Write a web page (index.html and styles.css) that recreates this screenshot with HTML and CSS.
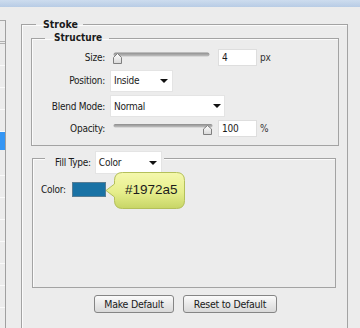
FILE: index.html
```html
<!DOCTYPE html>
<html lang="en">
<head>
    <meta charset="UTF-8">
    <title>Layer Style - Stroke</title>
    <link rel="stylesheet" href="styles.css">
</head>
<body>
    <div class="titlebar"></div>
    <div class="main">
        <div class="sidebar">
            <div class="side-row first"></div>
            <div class="side-row"></div>
            <div class="side-row"></div>
            <div class="side-row"></div>
            <div class="side-row"></div>
            <div class="side-row active"></div>
            <div class="side-row"></div>
            <div class="side-row"></div>
            <div class="side-row"></div>
            <div class="side-row"></div>
            <div class="side-row"></div>
            <div class="side-row"></div>
            <div class="side-row"></div>
            <div class="side-row"></div>
        </div>

        <fieldset class="group stroke">
            <legend>Stroke</legend>

            <fieldset class="group structure">
                <legend>Structure</legend>
                <div class="form-row row-size">
                    <label>Size:</label>
                    <svg class="slider" width="97" height="13" viewBox="0 0 97 13">
                        <defs>
                            <linearGradient id="track" x1="0" y1="0" x2="0" y2="1">
                                <stop offset="0" stop-color="#8c8c8c"/>
                                <stop offset="1" stop-color="#c4c4c4"/>
                            </linearGradient>
                            <linearGradient id="thumb" x1="0" y1="0" x2="0" y2="1">
                                <stop offset="0" stop-color="#ffffff"/>
                                <stop offset="1" stop-color="#d8d8d8"/>
                            </linearGradient>
                        </defs>
                        <rect x="0.5" y="0.5" width="96" height="4" rx="2" fill="url(#track)"/>
                        <path d="M4.5 1.5 L8.5 5.5 V11.5 H0.5 V5.5 Z" fill="url(#thumb)" stroke="#7f7f7f"/>
                    </svg>
                    <input class="num" type="text" value="4">
                    <span class="unit">px</span>
                </div>
                <div class="form-row row-position">
                    <label>Position:</label>
                    <div class="select sel-position"><span>Inside</span><i class="arrow"></i></div>
                </div>
                <div class="form-row row-blend">
                    <label>Blend Mode:</label>
                    <div class="select sel-blend"><span>Normal</span><i class="arrow"></i></div>
                </div>
                <div class="form-row row-opacity">
                    <label>Opacity:</label>
                    <svg class="slider slider-opacity" width="100" height="11" viewBox="0 0 100 11">
                        <rect x="0.5" y="0" width="99" height="3.5" rx="1.75" fill="url(#track)"/>
                        <path d="M94.5 1.5 L98.5 5 V10.5 H90.5 V5 Z" fill="url(#thumb)" stroke="#7f7f7f"/>
                    </svg>
                    <input class="num" type="text" value="100">
                    <span class="unit">%</span>
                </div>
            </fieldset>

            <div class="fill">
                <div class="fill-head">
                    <label>Fill Type:</label>
                    <div class="select sel-fill"><span>Color</span><i class="arrow"></i></div>
                </div>
                <div class="color-row">
                    <label>Color:</label>
                    <div class="swatch"></div>
                </div>
                <div class="tip">
                    <svg class="tip-shape" width="81" height="39" viewBox="0 0 81 39">
                        <defs>
                            <linearGradient id="tipfill" x1="0" y1="0" x2="0" y2="1">
                                <stop offset="0" stop-color="#f5f8ad"/>
                                <stop offset="0.55" stop-color="#e6ee8c"/>
                                <stop offset="1" stop-color="#c7d566"/>
                            </linearGradient>
                        </defs>
                        <path d="M17.5 1.5 H71.5 Q79.5 1.5 79.5 9.5 V29.5 Q79.5 37.5 71.5 37.5 H17.5 Q9.5 37.5 9.5 29.5 V26 L1 19.5 L9.5 13 V9.5 Q9.5 1.5 17.5 1.5 Z" fill="url(#tipfill)" stroke="#b4c05a"/>
                    </svg>
                    <span class="tip-text">#1972a5</span>
                </div>
            </div>

            <div class="buttons">
                <button type="button" class="btn btn-make">Make Default</button>
                <button type="button" class="btn btn-reset">Reset to Default</button>
            </div>
        </fieldset>
    </div>
</body>
</html>
```

FILE: styles.css
```css
html, body {
    margin: 0;
    padding: 0;
}
body {
    width: 360px;
    height: 328px;
    overflow: hidden;
    background-color: #ececec;
    font-family: 'DejaVu Sans Condensed', 'DejaVu Sans', sans-serif;
    font-size: 10px;
    letter-spacing: -0.25px;
    color: #1a1a1a;
}
.titlebar {
    height: 7px;
    background: linear-gradient(#cddcee, #b8cce5);
}
.main {
    display: flex;
    align-items: flex-start;
    height: 321px;
    overflow: hidden;
}

/* left list of styles */
.sidebar {
    width: 5px;
    margin-top: 13px;
    border-top: 1px solid #a8a8a8;
    border-right: 1px solid #a0a0a0;
    flex-shrink: 0;
}
.side-row {
    height: 21px;
    border-bottom: 1px solid #fafafa;
}
.side-row.first {
    height: 20px;
    border-bottom: 3px double #b0b0b0;
}
.side-row.active {
    height: 18px;
    border-bottom: 4px solid #ececec;
    background-color: #3596f4;
}

/* group boxes */
.group {
    margin: 0;
    padding: 0;
    min-inline-size: 0;
    border: 1px solid #a3a3a3;
    box-shadow: inset 1px 1px 0 #fbfbfb;
}
.group legend {
    height: 14px;
    line-height: 14px;
    font-size: 10px;
    font-weight: bold;
    letter-spacing: 0;
    color: #1a1a1a;
}
.stroke {
    flex: 1;
    margin: 10px 12px 0 15px;
    height: 400px;
}
.stroke > legend {
    margin-left: 14px;
    padding: 0 5px 0 7px;
    font-size: 10.5px;
}
.structure {
    margin: 0 8px 0 9px;
    padding: 1px 0 8px 0;
}
.structure > legend {
    margin-left: 13px;
    padding: 0 7px 0 9px;
}

/* rows */
.form-row {
    display: flex;
    align-items: center;
}
.form-row label {
    width: 73px;
    padding-right: 5px;
    text-align: right;
    flex-shrink: 0;
}
.row-size { height: 22px; }
.row-position { height: 25px; }
.row-blend { height: 26px; }
.row-opacity { height: 18px; }

.slider {
    display: block;
    align-self: flex-start;
    margin-left: 3px;
    margin-top: 6px;
}
.slider-opacity {
    margin-top: 5px;
}
.num {
    box-sizing: border-box;
    width: 39px;
    height: 17px;
    margin: 0 0 0 8px;
    padding: 0 3px;
    border: 1px solid #dedede;
    background-color: #fff;
    font-family: inherit;
    font-size: 10px;
    letter-spacing: inherit;
    color: #1a1a1a;
    outline: none;
}
.row-opacity .num {
    margin-left: 5px;
}
.unit {
    margin-left: 3px;
    color: #333;
}

.select {
    box-sizing: border-box;
    display: flex;
    align-items: center;
    justify-content: space-between;
    height: 22px;
    padding: 0 4px 0 3px;
    border: 1px solid #e4e4e4;
    background-color: #fff;
}
.sel-position { width: 63px; }
.sel-blend { width: 115px; padding-right: 3px; }
.sel-fill { width: 67px; height: 23px; }
.arrow {
    width: 0;
    height: 0;
    border-left: 4px solid transparent;
    border-right: 4px solid transparent;
    border-top: 4px solid #111;
}

/* fill box */
.fill {
    position: relative;
    box-sizing: border-box;
    height: 130px;
    margin: 12px 11px 0 10px;
    border: 1px solid #a3a3a3;
    box-shadow: inset 1px 1px 0 #fbfbfb;
}
.fill-head {
    display: flex;
    align-items: center;
    width: fit-content;
    height: 23px;
    margin: -8px 0 0 12px;
    padding: 0 2px 0 10px;
    background-color: #ececec;
}
.fill-head label {
    margin-right: 4px;
}
.color-row {
    display: flex;
    align-items: center;
    height: 15px;
    margin-top: 8px;
    padding-left: 8px;
}
.color-row label {
    width: 31px;
}
.swatch {
    box-sizing: border-box;
    width: 34px;
    height: 15px;
    background-color: #1972a5;
    border: 1px solid #587d94;
}

/* tooltip bubble */
.tip {
    position: absolute;
    left: 72px;
    top: 12px;
    width: 81px;
    height: 39px;
}
.tip-shape {
    position: absolute;
    left: 0;
    top: 0;
}
.tip-text {
    position: absolute;
    left: 20px;
    top: 11px;
    font-family: 'Liberation Sans', sans-serif;
    font-size: 13.5px;
    line-height: 16px;
    letter-spacing: 0;
    color: #1c1c1c;
}

/* buttons */
.buttons {
    display: flex;
    gap: 9px;
    margin-top: 7px;
    padding-left: 72px;
}
.btn {
    box-sizing: border-box;
    height: 18px;
    padding: 0;
    border: 1px solid #858585;
    border-radius: 3px;
    background: linear-gradient(#fbfbfb, #e9e9e9 50%, #d9d9d9);
    font-family: inherit;
    font-size: 10.5px;
    letter-spacing: inherit;
    color: #1a1a1a;
}
.btn-make { width: 80px; }
.btn-reset { width: 94px; }
```
